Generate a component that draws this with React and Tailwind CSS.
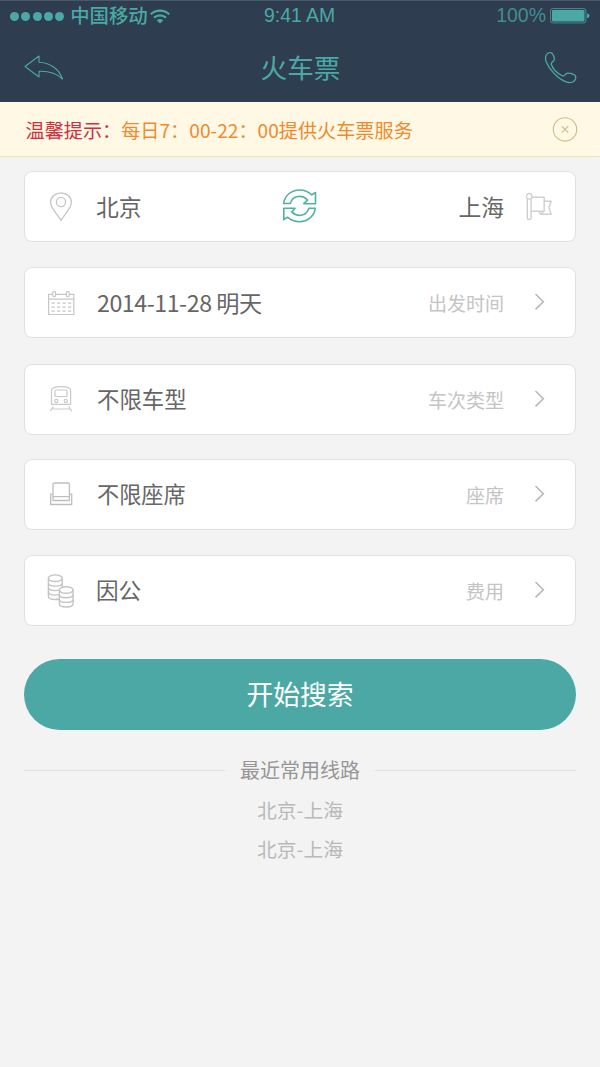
const ROWS = [
  { icon: CalendarIcon, value: '2014-11-28 明天', label: '出发时间', size: 'pt-[2px] text-[23.200px] tracking-[-0.450px]', gap: 'mt-[25px]' },
  { icon: TrainIcon, value: '不限车型', label: '车次类型', size: 'text-[22.400px]', gap: 'mt-[26px]' },
  { icon: SeatIcon, value: '不限座席', label: '座席', size: 'text-[22.200px]', gap: 'mt-[24px]' },
  { icon: CoinsIcon, value: '因公', label: '费用', size: '-ml-px pt-[2px] text-[22.600px]', gap: 'mt-[25px]' },
]

const RECENT = ['北京-上海', '北京-上海']

function BackIcon() {
  return (
    <svg width="40" height="26" viewBox="0 0 40 26" fill="none" stroke="#4ba8a4" strokeWidth="1.1" strokeLinejoin="round">
      <path d="M1 12.5 15 2v6.2C25 8.5 35 14.500 38.500 25 32 18.500 24 17 15 17.300v5.700Z" />
    </svg>
  )
}

function PhoneIcon() {
  return (
    <svg width="33" height="33" viewBox="0 0 33 33" fill="none" stroke="#4ba8a4" strokeWidth="1.3" strokeLinejoin="round">
      <path d="M2.300 4C3.500 1.800 6.500.800 8 2.200c1.600 2 2.600 4.600 2.200 6.800-.4 1.700-3 2.200-3 4 1.500 5 6.600 9.800 11.600 12 1.800.3 2.800-2.400 4.600-2.800 2.200-.3 5.400.6 7.600 2 1.400 1.400.6 4.600-1 6-2.200 1.600-5.600 1.600-8.600.4C13.800 27.600 5 18.400 2 10.200 1.300 8 1.300 5.800 2.300 4Z" />
    </svg>
  )
}

function WifiIcon() {
  return (
    <svg width="20" height="15" viewBox="0 0 20 15" fill="none" stroke="#4ba8a4" strokeWidth="2.200">
      <path d="M.8 5.200c5.300-4.700 13.100-4.700 18.400 0M4 8.600c3.500-3 8.500-3 12 0" />
      <path d="M10 14.500 6.700 11.200c1.900-1.600 4.700-1.600 6.600 0Z" fill="#4ba8a4" stroke="none" />
    </svg>
  )
}

function BatteryIcon() {
  return (
    <svg width="40" height="16" viewBox="0 0 40 16" fill="none">
      <rect x=".6" y=".6" width="35.300" height="14.300" rx="2.200" stroke="#4ba8a4" strokeOpacity=".75" />
      <rect x="2" y="2" width="32.500" height="11.500" rx="1" fill="#4ba8a4" />
      <path d="M37 5.300c3.300.8 3.300 4.200 0 5Z" fill="#4ba8a4" />
    </svg>
  )
}

function CloseIcon() {
  return (
    <svg width="26" height="26" viewBox="0 0 26 26" fill="none" stroke="#d3bb80" strokeWidth="1.100">
      <circle cx="13" cy="13.400" r="11.700" />
      <path d="m9.800 10.200 6.400 6.400m0-6.400-6.400 6.400" />
    </svg>
  )
}

function PinIcon() {
  return (
    <svg width="24" height="30" viewBox="0 0 24 30" fill="none" stroke="#c6c6c6" strokeWidth="1.300" strokeLinejoin="round">
      <path d="M12 28.300C8 22 1.600 16 1.600 10.500 1.600 5 6.300.8 12 .8S22.400 5 22.400 10.500c0 5.500-6.400 11.500-10.400 17.800Z" />
      <circle cx="12" cy="10" r="4.600" />
    </svg>
  )
}

function SwapIcon() {
  return (
    <svg width="36" height="36" viewBox="0 0 36 36" fill="none" stroke="#4fb3a4" strokeWidth="1.600" strokeLinejoin="round">
      <path d="M1.700 15.500C2.500 7.500 9.500 2 17.500 2c4.800 0 9 1.700 12.300 4.900L33.500 4.500v11.200H21.800l3.800-3.600C20.500 6.500 10.500 7 8.300 15.500Z" />
      <path d="M33.300 20.200C32.500 28.200 25.500 33.700 17.500 33.700c-4.800 0-8.700-1.500-12-4.500L1.800 31.700V20.200h11.300l-3.400 3.700c5 5.200 14.500 5 17.200-3.700Z" />
    </svg>
  )
}

function FlagIcon() {
  return (
    <svg width="28" height="30" viewBox="0 0 28 30" fill="none" stroke="#d0d0d0" strokeWidth="1.400" strokeLinejoin="round">
      <circle cx="4.200" cy="4.300" r="2.800" />
      <path d="M2.300 7v19.200c0 1.700 3.800 1.700 3.800 0V7M7 5.200h12.200v14H6.200M19.200 9.200h7l-2.300 6.300 2.300 6.700H15.500l-1.800-3M19.200 19.200l-3.700 3" />
    </svg>
  )
}

function CalendarIcon() {
  return (
    <svg className="mt-[2px]" width="28" height="26" viewBox="0 0 28 26" fill="none" stroke="#c6c6c6" strokeWidth="1.200">
      <path d="M5.500 4.300H1.600v20.200h25.200V4.300h-4.100M8.700 4.300h10.600M1.600 9.200h25.200" />
      <rect x="5.700" y="1.600" width="2.900" height="5" rx="1.300" />
      <rect x="19.300" y="1.600" width="2.900" height="5" rx="1.300" />
      <path d="M4.500 13.200h20M4.500 17.200h20M4.500 21.200h20" strokeWidth="1.300" strokeDasharray="3.200 2.300" />
    </svg>
  )
}

function TrainIcon() {
  return (
    <svg width="24" height="28" viewBox="0 0 24 28" fill="none" stroke="#c9c9c9" strokeWidth="1.200">
      <path d="M2.500 19.300V5.500C2.500 2.800 6 1.700 12 1.700S21.600 2.800 21.600 5.500v13.800Z" />
      <rect x="6" y="5" width="12" height="6.500" rx="1" />
      <circle cx="7.300" cy="16" r="1.600" />
      <circle cx="16.800" cy="16" r="1.600" />
      <path d="m4.500 21.300-3.200 5M19.600 21.300l3.200 5M3 24h18" />
    </svg>
  )
}

function SeatIcon() {
  return (
    <svg width="24" height="26" viewBox="0 0 24 26" fill="none" stroke="#bfbfbf" strokeWidth="1.300">
      <path d="M4 19.500V3.200c0-.8.500-1.200 1.200-1.200h14c.7 0 1.200.4 1.200 1.200v16.300ZM4 15.700h16.400" />
      <path d="M3.800 13.200H1.700v10.300h21V13.200h-2.100" />
    </svg>
  )
}

function CoinsIcon() {
  return (
    <svg className="mt-[2px]" width="28" height="36" viewBox="0 0 28 36" fill="none" stroke="#c4c4c4" strokeWidth="1.400">
      <ellipse cx="8.300" cy="5.200" rx="6.900" ry="3.300" />
      <path d="M1.400 5.200v18c0 1.900 3 3.300 6.900 3.300 1.400 0 2.500-.1 3.500-.5M15.200 5.200v9M1.400 9.800c0 1.900 3 3.300 6.900 3.300s6.900-1.400 6.900-3.300M1.400 14.300c0 1.900 3 3.300 6.900 3.300 1.400 0 2.500-.1 3.500-.4M1.400 18.800c0 1.900 3 3.300 6.900 3.300 1.400 0 2.500-.1 3.500-.4" />
      <ellipse cx="19.200" cy="17" rx="6.900" ry="3.200" />
      <path d="M12.300 17v13.800c0 1.800 3 3.200 6.900 3.200s6.900-1.400 6.900-3.200V17M12.300 21.600c0 1.800 3 3.200 6.900 3.200s6.900-1.400 6.900-3.200M12.300 26.200c0 1.800 3 3.200 6.900 3.200s6.900-1.400 6.900-3.200" />
    </svg>
  )
}

function ChevronIcon() {
  return (
    <svg width="12" height="18" viewBox="0 0 12 18" fill="none" stroke="#b8b8b8" strokeWidth="1.600">
      <path d="m1.500 1 7.800 7.700-7.800 7.700" />
    </svg>
  )
}

function Row({ icon: Icon, value, label, size, gap }) {
  return (
    <div className={`flex h-[71px] items-center rounded-lg border border-[#e0e0e0] bg-white pb-[2px] ${gap}`}>
      <div className="flex w-[72px] justify-center">
        <Icon />
      </div>
      <span className={`flex-1 leading-none text-[#666] ${size}`}>{value}</span>
      <span className="pt-[2px] text-[19px] leading-none text-[#c4c4c4]">{label}</span>
      <div className="mr-[29px] ml-[30px]">
        <ChevronIcon />
      </div>
    </div>
  )
}

export default function App() {
  return (
    <div className="min-h-[1067px] w-[600px] bg-[#f3f3f3] font-['Noto_Sans_CJK_SC',sans-serif]">
      <header className="h-[102px] bg-[#2e3e50] text-[#4ba8a4]">
        {/* Status bar */}
        <div className="flex h-8 items-center border-t border-[#4a5969] px-[10px] pb-px">
          <div className="flex w-[254px] items-center">
            <div className="flex gap-[2.300px]">
              {[0, 1, 2, 3, 4].map(i => (
                <span key={i} className="size-[9px] rounded-full bg-[#4ba8a4]" />
              ))}
            </div>
            <span className="mr-[2px] mb-[2px] ml-[6px] text-[19.400px] leading-none font-medium">中国移动</span>
            <WifiIcon />
          </div>
          <span className="flex-1 font-['Liberation_Sans',sans-serif] text-[19.400px] leading-none">9:41 AM</span>
          <span className="mr-[4px] font-['Liberation_Sans',sans-serif] text-[19.500px] leading-none opacity-75">100%</span>
          <BatteryIcon />
        </div>
        {/* Nav bar */}
        <div className="flex h-[70px] items-center pr-[23px] pl-[24px]">
          <div className="flex-1">
            <BackIcon />
          </div>
          <h1 className="text-[26.600px] leading-none">火车票</h1>
          <div className="flex flex-1 justify-end">
            <PhoneIcon />
          </div>
        </div>
      </header>

      {/* Notice */}
      <div className="flex h-[55px] items-center justify-between border-b border-[#f3e3ae] bg-[#fef8e5] pr-[22px] pl-[25.500px] text-[19.150px] leading-none">
        <p className="pt-[3px] text-[#f08a2c]">
          <span className="text-[#d2303c]">温馨提示：</span>每日7：00-22：00提供火车票服务
        </p>
        <CloseIcon />
      </div>

      <main className="px-6 pt-[14px]">
        {/* Stations */}
        <div className="flex h-[71px] items-center rounded-lg border border-[#e0e0e0] bg-white text-[22.800px] leading-none text-[#666]">
          <div className="flex w-[71px] justify-center">
            <PinIcon />
          </div>
          <span className="w-[186px] pt-px">北京</span>
          <div className="pb-[2px]">
            <SwapIcon />
          </div>
          <span className="flex-1 pt-px text-right">上海</span>
          <div className="mr-[22px] ml-[21px]">
            <FlagIcon />
          </div>
        </div>

        {ROWS.map(r => <Row key={r.label} {...r} />)}

        <button className="mt-[33px] block h-[71px] w-full rounded-full bg-[#4ba8a5] pb-px text-[26.800px] leading-none text-white">
          开始搜索
        </button>

        {/* Recent routes */}
        <div className="mt-[30px] flex items-center gap-[15px] text-[20px] leading-none text-[#969696]">
          <span className="h-px flex-1 bg-[#e2e2e2]" />
          最近常用线路
          <span className="h-px flex-1 bg-[#e2e2e2]" />
        </div>
        <ul className="mt-[20px] space-y-[19px] text-center text-[19.800px] leading-[20px] text-[#b9b9b9]">
          {RECENT.map((r, i) => <li key={i}>{r}</li>)}
        </ul>
      </main>
    </div>
  )
}
